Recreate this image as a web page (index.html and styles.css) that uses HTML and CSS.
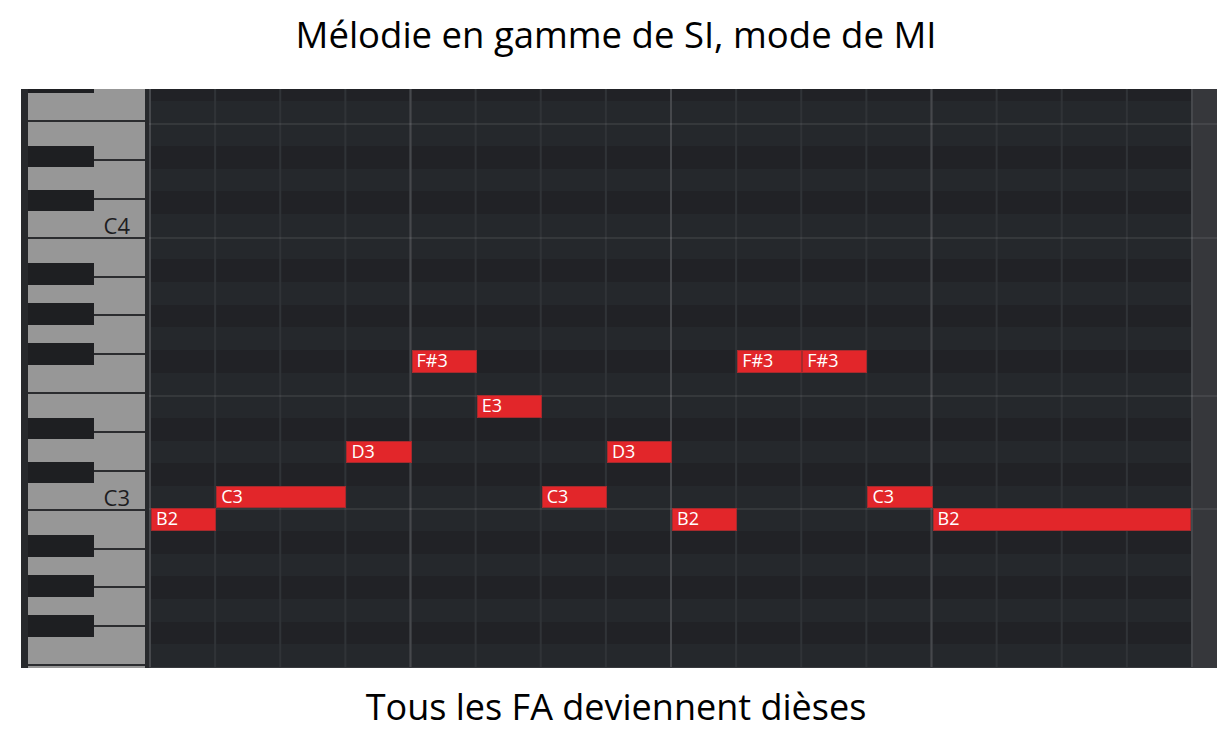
FILE: index.html
```html
<!DOCTYPE html>
<html lang="fr">
  <head>
    <meta charset="UTF-8" />
    <meta name="viewport" content="width=device-width, initial-scale=1.0" />
    <title>Mélodie en gamme de SI, mode de MI</title>
    <link rel="stylesheet" href="styles.css">
  </head>
  <body>
    <h1 class="title">Mélodie en gamme de SI, mode de MI</h1>

    <div class="roll">
      <div class="keys">
        <div class="octave first">
          <div class="wk"></div>
          <div class="wk"></div>
          <div class="wk"></div>
          <div class="wk"></div>
          <div class="wk"></div>
          <div class="wk"></div>
          <div class="wk"><span>C4</span></div>
          <div class="bk as"></div>
          <div class="bk gs"></div>
          <div class="bk fs"></div>
          <div class="bk ds"></div>
          <div class="bk cs"></div>
        </div>
        <div class="octave">
          <div class="wk"></div>
          <div class="wk"></div>
          <div class="wk"></div>
          <div class="wk"></div>
          <div class="wk"></div>
          <div class="wk"></div>
          <div class="wk"><span>C3</span></div>
          <div class="bk as"></div>
          <div class="bk gs"></div>
          <div class="bk fs"></div>
          <div class="bk ds"></div>
          <div class="bk cs"></div>
        </div>
        <div class="octave">
          <div class="wk"></div>
          <div class="wk"></div>
          <div class="wk"></div>
          <div class="wk"></div>
          <div class="wk"></div>
          <div class="wk"></div>
          <div class="wk"></div>
          <div class="bk as"></div>
          <div class="bk gs"></div>
          <div class="bk fs"></div>
          <div class="bk ds"></div>
          <div class="bk cs"></div>
        </div>
      </div>

      <div class="grid">
        <div class="rows">
          <div class="row b top"></div>
          <div class="row"></div>
          <div class="row edge"></div>
          <div class="row b"></div>
          <div class="row"></div>
          <div class="row b"></div>
          <div class="row"></div>
          <div class="row edge"></div>
          <div class="row b"></div>
          <div class="row"></div>
          <div class="row b"></div>
          <div class="row"></div>
          <div class="row b"></div>
          <div class="row"></div>
          <div class="row edge"></div>
          <div class="row b"></div>
          <div class="row"></div>
          <div class="row b"></div>
          <div class="row"></div>
          <div class="row edge"></div>
          <div class="row b"></div>
          <div class="row"></div>
          <div class="row b"></div>
          <div class="row"></div>
          <div class="row b"></div>
          <div class="row"></div>
        </div>

        <div class="notes">
          <div class="note" style="grid-row: 20; grid-column: 1 / span 1">B2</div>
          <div class="note" style="grid-row: 19; grid-column: 2 / span 2">C3</div>
          <div class="note" style="grid-row: 17; grid-column: 4 / span 1">D3</div>
          <div class="note" style="grid-row: 13; grid-column: 5 / span 1">F#3</div>
          <div class="note" style="grid-row: 15; grid-column: 6 / span 1">E3</div>
          <div class="note" style="grid-row: 19; grid-column: 7 / span 1">C3</div>
          <div class="note" style="grid-row: 17; grid-column: 8 / span 1">D3</div>
          <div class="note" style="grid-row: 20; grid-column: 9 / span 1">B2</div>
          <div class="note" style="grid-row: 13; grid-column: 10 / span 1">F#3</div>
          <div class="note" style="grid-row: 13; grid-column: 11 / span 1">F#3</div>
          <div class="note" style="grid-row: 19; grid-column: 12 / span 1">C3</div>
          <div class="note" style="grid-row: 20; grid-column: 13 / span 4">B2</div>
        </div>
      </div>
    </div>

    <p class="caption">Tous les FA deviennent dièses</p>
  </body>
</html>
```

FILE: styles.css
```css
body {
  margin: 0;
  background: #ffffff;
  color: #000000;
  font-family: "Open Sans", "Noto Sans", sans-serif;
}
.title {
  margin: 0 0 31px;
  padding-top: 10px;
  font-size: 36.5px;
  line-height: 48px;
  font-weight: 400;
  text-align: center;
}
.caption {
  margin: 15px 0 0;
  font-size: 36px;
  line-height: 48px;
  text-align: center;
}

/* piano roll */
.roll {
  display: flex;
  width: 1196px;
  height: 579px;
  margin-left: 21px;
  padding-left: 7px;
  box-sizing: border-box;
  background: #27292c;
}
.keys {
  flex: none;
  width: 117px;
  margin-right: 4px;
  overflow: hidden;
}
.octave {
  position: relative;
  height: 272px;
  display: flex;
  flex-direction: column;
}
.octave.first {
  margin-top: -124.33px;
}
.wk {
  flex: none;
  height: 38.857px;
  box-sizing: border-box;
  border-top: 2px solid #2b2c2f;
  background: #979797;
  display: flex;
  align-items: flex-end;
  justify-content: flex-end;
  padding: 0 15px 1px 0;
}
.wk span {
  font-size: 22px;
  line-height: 22px;
  color: #1d1d1f;
}
.bk {
  position: absolute;
  left: 0;
  width: 66px;
  height: 21.7px;
  background: #1e1f22;
}
.as { top: 26.3px; }
.gs { top: 66.3px; }
.fs { top: 106.3px; }
.ds { top: 181px; }
.cs { top: 225px; }

.grid {
  position: relative;
  flex: none;
  width: 1068px;
  background: #383a3e;
}
.rows {
  display: flex;
  flex-direction: column;
}
.row {
  position: relative;
  flex: none;
  height: 22.667px;
  background-color: #25282c;
  background-image:
    linear-gradient(to left, #36373b 24px, #46484c 24px 26px, transparent 26px),
    linear-gradient(to right, #46484c 2px, transparent 2px),
    linear-gradient(to right, #303337 2px, transparent 2px);
  background-size: 100% 100%, 260.5px 100%, 65.125px 100%;
}
.row.b {
  background-color: #212226;
}
.row.top {
  height: 11.667px;
}
.row.edge::before {
  content: "";
  position: absolute;
  left: 0;
  right: 0;
  top: 0;
  height: 2px;
  background: rgba(255, 255, 255, 0.075);
}
.notes {
  position: absolute;
  top: 0;
  left: 0;
  right: 26px;
  bottom: 0;
  display: grid;
  grid-template-columns: repeat(16, 1fr);
  grid-template-rows: 11.667px repeat(25, 22.667px);
}
.note {
  margin: 0 -2px 0 2px;
  box-sizing: border-box;
  border: 1.5px solid #a62a2d;
  background: #e2262a;
  color: #ffffff;
  font-size: 18px;
  line-height: 19px;
  padding-left: 4px;
  white-space: nowrap;
}
.note:last-child {
  margin-right: 0;
}
```
